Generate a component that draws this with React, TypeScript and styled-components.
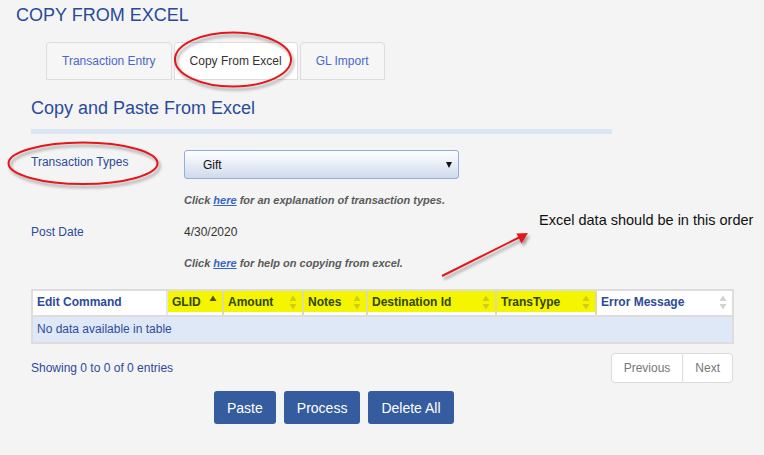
import React from 'react';
import styled, { createGlobalStyle } from 'styled-components';

const GlobalStyle = createGlobalStyle`
  html, body {
    margin: 0;
    padding: 0;
    background: #f4f4f4;
  }
  body {
    font-family: "Liberation Sans", Arial, sans-serif;
  }
  * {
    box-sizing: border-box;
  }
`;

const BLUE = '#2b4a9a';
const OLIVE = '#2f4500';

const Page = styled.div`
  position: relative;
  width: 764px;
  height: 455px;
  overflow: hidden;
  padding-top: 5px;
`;

const Title = styled.h1`
  margin: 0 0 0 16px;
  font-size: 18px;
  line-height: 20px;
  font-weight: normal;
  color: #274a9b;
`;

const Tabs = styled.div`
  display: flex;
  gap: 2px;
  margin: 17px 0 0 46px;
`;

const Tab = styled.div<{ $active?: boolean }>`
  height: 38px;
  padding: 0 15px;
  display: flex;
  align-items: center;
  border: 1px solid #dcdcdc;
  border-radius: 4px 4px 0 0;
  background: ${p => (p.$active ? '#ffffff' : '#f6f6f6')};
  color: ${p => (p.$active ? '#333333' : '#4a68c9')};
  font-size: 12px;
`;

const Heading = styled.h2`
  margin: 18px 0 0 31px;
  font-size: 18px;
  line-height: 20px;
  font-weight: normal;
  color: #2a4b9b;
`;

const HeadingBar = styled.div`
  margin: 11px 0 0 31px;
  width: 581px;
  height: 5px;
  background: #dce6f3;
`;

const Content = styled.div`
  margin-left: 31px;
  width: 703px;
`;

const FormRow = styled.div<{ $gap: number }>`
  display: grid;
  grid-template-columns: 153px 1fr;
  margin-top: ${p => p.$gap}px;
  font-size: 12px;
  line-height: 14px;
`;

const Label = styled.div<{ $pad?: number }>`
  color: ${BLUE};
  padding-top: ${p => p.$pad ?? 0}px;
`;

const Value = styled.div`
  color: #333333;
`;

const SelectBox = styled.div`
  width: 275px;
  height: 29px;
  display: flex;
  align-items: center;
  justify-content: space-between;
  padding: 0 6px 0 18px;
  border: 1px solid #8fadde;
  border-radius: 3px;
  background: linear-gradient(#ffffff, #cfdaec);
  color: #111111;
  font-size: 12px;
`;

const Caret = styled.span`
  width: 0;
  height: 0;
  border-left: 3px solid transparent;
  border-right: 3px solid transparent;
  border-top: 6px solid #111111;
`;

const Help = styled.div<{ $gap: number }>`
  margin-top: ${p => p.$gap}px;
  padding-left: 153px;
  font-size: 11px;
  line-height: 14px;
  font-style: italic;
  font-weight: bold;
  color: #5a5a5a;
`;

const HelpLink = styled.a`
  color: #3567c9;
  text-decoration: underline;
`;

const Table = styled.div`
  margin-top: 19px;
  border: 2px solid #dddddd;
`;

const HeaderRow = styled.div`
  display: grid;
  grid-template-columns: 135px 56px 80px 64px 129px 100px 135px;
  height: 26px;
  border-bottom: 2px solid #dddddd;
`;

const HeaderCell = styled.div<{ $marked?: boolean; $last?: boolean }>`
  display: flex;
  align-items: center;
  justify-content: space-between;
  padding: 0 5px 2px 4px;
  font-size: 12px;
  font-weight: bold;
  color: ${p => (p.$marked ? OLIVE : BLUE)};
  background: ${p => (p.$marked ? 'linear-gradient(#f5f500 0 21px, #ffffff 21px)' : '#ffffff')};
  border-right: ${p => (p.$last ? 'none' : `2px solid ${p.$marked ? '#dede9a' : '#e6e6e6'}`)};
  white-space: nowrap;
`;

const EmptyRow = styled.div`
  height: 25px;
  line-height: 25px;
  padding-left: 4px;
  background: #dfe8f6;
  color: #2f4c9b;
  font-size: 12px;
`;

const InfoRow = styled.div`
  display: flex;
  align-items: center;
  justify-content: space-between;
  margin-top: 9px;
  padding-right: 1px;
`;

const Info = styled.div`
  font-size: 12px;
  color: ${BLUE};
`;

const Pager = styled.div`
  display: flex;
  height: 30px;
  background: #ffffff;
  border: 1px solid #dcdcdc;
  border-radius: 4px;
  overflow: hidden;
`;

const PagerButton = styled.div<{ $first?: boolean }>`
  display: flex;
  align-items: center;
  padding: 0 12px;
  font-size: 12px;
  color: #777777;
  border-right: ${p => (p.$first ? '1px solid #dcdcdc' : 'none')};
`;

const Actions = styled.div`
  display: flex;
  gap: 8px;
  margin-top: 8px;
  padding-left: 183px;
`;

const ActionButton = styled.button`
  height: 33px;
  padding: 0 13px;
  border: none;
  border-radius: 3px;
  background: #355c9f;
  color: #ffffff;
  font-family: "Liberation Sans", Arial, sans-serif;
  font-size: 14px;
`;

const Overlay = styled.svg`
  position: absolute;
  top: 0;
  left: 0;
  pointer-events: none;
`;

const Note = styled.div`
  position: absolute;
  left: 539px;
  top: 212px;
  font-size: 14.5px;
  line-height: 16px;
  color: #111111;
  white-space: nowrap;
`;

type SortState = 'asc' | 'none' | 'off';

const SortIcon = ({ state, marked }: { state: SortState; marked?: boolean }) => {
  if (state === 'off') return null;
  const idle = marked ? '#cdcd1a' : '#d2d2d2';
  const active = marked ? '#4f5300' : '#666666';
  return (
    <svg width="8" height="15" viewBox="0 0 8 15">
      <path d="M4 0.5 L7.5 6 L0.5 6 Z" fill={state === 'asc' ? active : idle} />
      {state === 'none' && <path d="M0.5 9 L7.5 9 L4 14.5 Z" fill={idle} />}
    </svg>
  );
};

const columns: { title: string; marked?: boolean; sort: SortState }[] = [
  { title: 'Edit Command', sort: 'off' },
  { title: 'GLID', marked: true, sort: 'asc' },
  { title: 'Amount', marked: true, sort: 'none' },
  { title: 'Notes', marked: true, sort: 'none' },
  { title: 'Destination Id', marked: true, sort: 'none' },
  { title: 'TransType', marked: true, sort: 'none' },
  { title: 'Error Message', sort: 'none' },
];

const App = () => {
  return (
    <Page>
      <GlobalStyle />
      <Title>COPY FROM EXCEL</Title>

      <Tabs>
        <Tab>Transaction Entry</Tab>
        <Tab $active>Copy From Excel</Tab>
        <Tab>GL Import</Tab>
      </Tabs>

      <Heading>Copy and Paste From Excel</Heading>
      <HeadingBar />

      <Content>
        <FormRow $gap={16}>
          <Label $pad={5}>Transaction Types</Label>
          <SelectBox>
            <span>Gift</span>
            <Caret />
          </SelectBox>
        </FormRow>
        <Help $gap={14}>
          Click <HelpLink>here</HelpLink> for an explanation of transaction types.
        </Help>

        <FormRow $gap={18}>
          <Label>Post Date</Label>
          <Value>4/30/2020</Value>
        </FormRow>
        <Help $gap={17}>
          Click <HelpLink>here</HelpLink> for help on copying from excel.
        </Help>

        <Table>
          <HeaderRow>
            {columns.map((col, i) => (
              <HeaderCell key={col.title} $marked={col.marked} $last={i === columns.length - 1}>
                <span>{col.title}</span>
                <SortIcon state={col.sort} marked={col.marked} />
              </HeaderCell>
            ))}
          </HeaderRow>
          <EmptyRow>No data available in table</EmptyRow>
        </Table>

        <InfoRow>
          <Info>Showing 0 to 0 of 0 entries</Info>
          <Pager>
            <PagerButton $first>Previous</PagerButton>
            <PagerButton>Next</PagerButton>
          </Pager>
        </InfoRow>

        <Actions>
          <ActionButton>Paste</ActionButton>
          <ActionButton>Process</ActionButton>
          <ActionButton>Delete All</ActionButton>
        </Actions>
      </Content>

      {/* hand-drawn annotations laid over the screen */}
      <Overlay width="764" height="455" viewBox="0 0 764 455">
        <defs>
          <filter id="shade" x="-20%" y="-20%" width="140%" height="160%">
            <feDropShadow dx="2" dy="3" stdDeviation="1.5" floodColor="#000" floodOpacity="0.35" />
          </filter>
        </defs>
        <g filter="url(#shade)" fill="none" stroke="#e3191c" strokeWidth="2">
          <ellipse cx="233" cy="59.5" rx="58" ry="27" />
          <ellipse cx="83" cy="163.3" rx="74.5" ry="20.7" />
          <line x1="442" y1="276" x2="520" y2="237" />
        </g>
        <path d="M528 233 L516.5 233.6 L521.5 243.4 Z" fill="#e3191c" filter="url(#shade)" />
      </Overlay>
      <Note>Excel data should be in this order</Note>
    </Page>
  );
};

export default App;
